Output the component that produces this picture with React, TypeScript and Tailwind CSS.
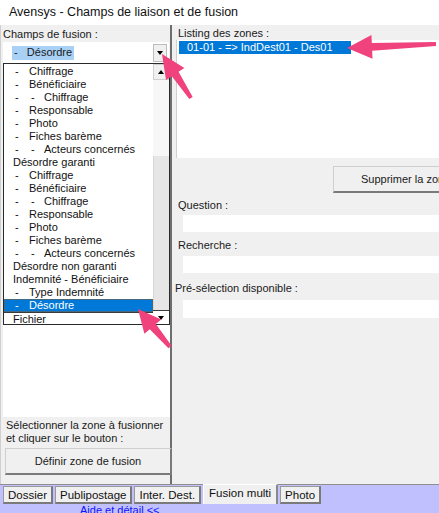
import React from "react";

type Pt = [number, number];

// annotation arrow polygon: tip, tail, head length, head half width, shaft half width
function arrowPoints(tip: Pt, tail: Pt, hl: number, hw: number, sw: number) {
  const dx = tail[0] - tip[0];
  const dy = tail[1] - tip[1];
  const len = Math.hypot(dx, dy);
  const ux = dx / len;
  const uy = dy / len;
  const nx = -uy;
  const ny = ux;
  const bx = tip[0] + ux * hl;
  const by = tip[1] + uy * hl;
  const pts: Pt[] = [
    tip,
    [bx + nx * hw, by + ny * hw],
    [bx + nx * sw, by + ny * sw],
    [tail[0] + nx * (sw * 0.5), tail[1] + ny * (sw * 0.5)],
    [tail[0] - nx * (sw * 0.5), tail[1] - ny * (sw * 0.5)],
    [bx - nx * sw, by - ny * sw],
    [bx - nx * hw, by - ny * hw],
  ];
  return pts.map((p) => p.join(",")).join(" ");
}

const fields: [number, string][] = [
  [1, "Chiffrage"],
  [1, "Bénéficiaire"],
  [2, "Chiffrage"],
  [1, "Responsable"],
  [1, "Photo"],
  [1, "Fiches barème"],
  [2, "Acteurs concernés"],
  [0, "Désordre garanti"],
  [1, "Chiffrage"],
  [1, "Bénéficiaire"],
  [2, "Chiffrage"],
  [1, "Responsable"],
  [1, "Photo"],
  [1, "Fiches barème"],
  [2, "Acteurs concernés"],
  [0, "Désordre non garanti"],
  [0, "Indemnité - Bénéficiaire"],
  [1, "Type Indemnité"],
  [1, "Désordre"],
  [0, "Fichier"],
];

function FieldRow({ level, label, selected }: { level: number; label: string; selected?: boolean }) {
  return (
    <div
      className={
        "flex h-[13px] items-center whitespace-nowrap leading-[13px] " +
        (selected ? "bg-[#0078d7] text-white outline outline-1 outline-dotted outline-[#8a5a2a] -outline-offset-1" : "text-[#111]")
      }
    >
      {level === 0 && <span className="pl-[9px]">{label}</span>}
      {level === 1 && (
        <>
          <span className="w-[25px] pl-[11px]">-</span>
          <span>{label}</span>
        </>
      )}
      {level === 2 && (
        <>
          <span className="w-[27px] pl-[11px]">-</span>
          <span className="w-[13px]">-</span>
          <span>{label}</span>
        </>
      )}
    </div>
  );
}

function TextBox() {
  return <div className="ml-[11px] h-[17px] bg-white" />;
}

function Tab({ label, active }: { label: string; active?: boolean }) {
  if (active) {
    return (
      <div className="-mt-[2px] flex h-[20px] items-start border-l border-t border-r-2 border-white border-r-[#8a8a8a] bg-[#f0f0f0] px-[5px] pt-[1px] leading-[14px]">
        {label}
      </div>
    );
  }
  return (
    <div className="flex h-[18px] items-center border border-[#9a9a9a] border-b-2 border-r-2 border-b-[#7a7a7a] border-r-[#7a7a7a] bg-[#f0f0f0] px-[4px] leading-[14px]">
      {label}
    </div>
  );
}

export default function App() {
  return (
    <div className="relative h-[513px] w-[439px] overflow-hidden bg-[#f0f0f0] text-[11px] text-[#1a1a1a] [font-family:'Liberation_Sans',Arial,sans-serif]">
      {/* title bar */}
      <div className="flex h-[25px] items-center bg-white pl-[9px] text-[12.5px] text-[#111]">
        Avensys - Champs de liaison et de fusion
      </div>

      <div className="flex h-[459px]">
        {/* left column */}
        <div className="flex w-[172px] flex-col border-l border-l-[#cfcfcf] border-r-2 border-r-[#6e6e6e] pl-[2px]">
          <div className="flex h-[17px] items-center pt-[1px]">Champs de fusion :</div>
          <div className="flex h-[21px] w-[166px] items-center bg-white pl-[9px] pr-[2px]">
            <span className="flex h-[14px] w-[62px] items-center bg-[#a9d0f5] pl-[2px] whitespace-pre">-   Désordre</span>
            <div className="ml-auto flex h-[18px] w-[14px] items-center justify-center border border-[#bdbdbd] bg-[#f0f0f0]">
              <span className="h-0 w-0 border-x-[3.5px] border-t-[4px] border-x-transparent border-t-black" />
            </div>
          </div>
          <div className="flex h-[354px] w-[167px] flex-col bg-white">
            <div className="flex h-[262px] border border-[#2a2a2a]">
              <div className="flex flex-1 flex-col pt-[1px]">
                {fields.map(([lvl, label], i) => (
                  <div key={i} className={i === 19 ? "border-t border-[#3a3a3a]" : ""}>
                    <FieldRow level={lvl} label={label} selected={i === 18} />
                  </div>
                ))}
              </div>
              <div className="flex w-[16px] flex-col">
                <div className="flex h-[16px] items-center justify-center border border-[#cfcfcf] bg-[#f0f0f0]">
                  <span className="h-0 w-0 border-x-[3.5px] border-b-[4px] border-x-transparent border-b-black" />
                </div>
                <div className="h-[76px] bg-[#f7f7f7]" />
                <div className="flex-1 border-l border-[#d6d6d6] bg-[#e6e6e6]" />
                <div className="flex h-[14px] items-center justify-center border-t border-[#3a3a3a] bg-white">
                  <span className="h-0 w-0 border-x-[3.5px] border-t-[4px] border-x-transparent border-t-black" />
                </div>
              </div>
            </div>
          </div>
          <div className="pl-[3px] pt-[2px] leading-[13px]">
            <div>Sélectionner la zone à fusionner</div>
            <div>et cliquer sur le bouton :</div>
          </div>
          <div className="ml-[2px] mt-[3px] flex h-[27px] w-[167px] items-center justify-center border border-[#cfcfcf] border-b-2 border-r-2 border-b-[#7a7a7a] border-r-[#7a7a7a] bg-[#f0f0f0]">
            Définir zone de fusion
          </div>
        </div>

        {/* right column */}
        <div className="flex flex-1 flex-col">
          <div className="flex h-[15px] items-center pl-[6px] pt-[1px]">Listing des zones :</div>
          <div className="ml-[4px] h-[118px] border-l border-[#d0d0d0] bg-white pl-[2px] pt-[1px]">
            <div className="flex h-[13px] w-[172px] items-center bg-[#0078d7] pl-[8px] text-white">
              01-01 - =&gt; IndDest01 - Des01
            </div>
          </div>
          <div className="mt-[8px] flex h-[27px]">
            <div className="ml-[161px] flex h-[27px] w-[130px] shrink-0 items-center border border-[#cfcfcf] border-b-2 border-b-[#7a7a7a] bg-[#f0f0f0] pl-[27px] whitespace-nowrap">
              Supprimer la zone
            </div>
          </div>
          <div className="flex h-[22px] items-end pl-[6px] pb-[2px]">Question :</div>
          <TextBox />
          <div className="flex h-[24px] items-end pl-[6px] pb-[3px]">Recherche :</div>
          <TextBox />
          <div className="flex h-[27px] items-end pl-[3px] pb-[4px]">Pré-sélection disponible :</div>
          <div className="ml-[11px] h-[18px] bg-white" />
        </div>
      </div>

      {/* bottom tabs */}
      <div className="h-[29px] border-t border-[#8f8f8f] bg-[#c0c0ff]">
        <div className="flex items-start gap-[2px] pl-[3px] pt-[1px] text-[11.5px] text-[#111]">
          <Tab label="Dossier" />
          <Tab label="Publipostage" />
          <Tab label="Inter. Dest." />
          <Tab label="Fusion multi" active />
          <Tab label="Photo" />
        </div>
        <div className="pl-[80px] leading-[12px] text-[#1010ff]">Aide et détail &lt;&lt;</div>
      </div>

      {/* annotation arrows */}
      <svg className="pointer-events-none absolute left-0 top-0" width="439" height="513">
        <polygon points={arrowPoints([162, 54], [191, 98], 24, 11, 4)} fill="#f0427c" />
        <polygon points={arrowPoints([347, 48], [436, 44], 25, 12, 4)} fill="#f0427c" />
        <polygon points={arrowPoints([138, 309], [170, 347], 23, 11, 4)} fill="#f0427c" />
      </svg>
    </div>
  );
}
